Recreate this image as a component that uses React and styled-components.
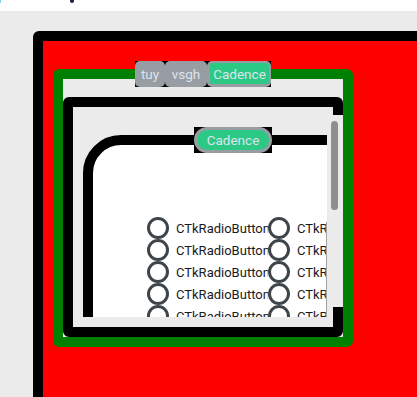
import React from 'react';
import styled, { createGlobalStyle } from 'styled-components';

const GlobalStyle = createGlobalStyle`
  html, body {
    margin: 0;
    padding: 0;
    overflow: hidden;
    background: #ebebeb;
    font-family: Roboto, "Liberation Sans", sans-serif;
  }
`;

const TitleStrip = styled.div`
  height: 11px;
  background: #fff;
  display: flex;
  align-items: flex-start;
`;

const TitleMark = styled.span`
  display: block;
  width: ${p => p.w}px;
  height: 3px;
  margin-left: ${p => p.left}px;
  background: ${p => p.color};
  border-radius: 0 0 2px 2px;
`;

const Desk = styled.div`
  padding: 20px 0 0 33px;
`;

const OuterFrame = styled.div`
  box-sizing: border-box;
  width: 420px;
  height: 400px;
  border: 10px solid #000;
  border-radius: 6px;
  background: #ff0000;
  padding: 20px 0 0 10px;
  overflow: hidden;
`;

const Tabview = styled.div`
  display: flex;
  flex-direction: column;
  align-items: center;
  width: ${p => p.width}px;
  flex-shrink: 0;
`;

const SegBar = styled.div`
  display: flex;
  height: 26px;
  background: #000;
  margin-bottom: -18px;
  position: relative;
  z-index: 1;
`;

const Segment = styled.div`
  box-sizing: border-box;
  width: ${p => p.width}px;
  height: 26px;
  display: flex;
  align-items: center;
  justify-content: center;
  border-radius: 5px;
  font-size: 13.5px;
  color: #dce4ee;
  background: ${p => (p.selected ? '#2cc985' : '#979da2')};
  border: ${p => (p.selected ? '3px solid #979da2' : 'none')};
  border-top-width: 2px;
  border-right-width: 2px;
`;

const TabFrame = styled.div`
  box-sizing: border-box;
  width: 300px;
  height: 278px;
  border: 10px solid #008000;
  border-radius: 6px;
  background: #ebebeb;
  padding-top: 18px;
  display: flex;
`;

const ScrollFrame = styled.div`
  box-sizing: border-box;
  position: relative;
  width: 280px;
  height: 240px;
  border: 10px solid #000;
  border-radius: 6px;
  background: #ebebeb;
  padding: 0 6px 10px 10px;
  display: flex;
`;

const Canvas = styled.div`
  position: relative;
  width: 244px;
  height: 210px;
  overflow: hidden;
  background: #ebebeb;
  display: flex;
`;

const ClipLine = styled.div`
  position: absolute;
  left: 243px;
  top: 115px;
  bottom: 0;
  width: 1px;
  background: #a4a4a4;
`;

const ScrollLane = styled.div`
  position: absolute;
  top: 8px;
  right: -10px;
  bottom: 20px;
  width: 16px;
  background: #ebebeb;
  padding: 6px 0 0 4px;
  box-sizing: border-box;
`;

const Thumb = styled.div`
  width: 7px;
  height: 89px;
  border-radius: 4px;
  background: #8e8e8e;
`;

const PillSlot = styled.div`
  margin-top: 20px;
  margin-bottom: -18px;
  background: #000;
  position: relative;
  z-index: 1;
`;

const Pill = styled.div`
  box-sizing: border-box;
  width: 78px;
  height: 26px;
  border: 3px solid #979da2;
  border-radius: 13px;
  background: #2cc985;
  color: #dce4ee;
  font-size: 13.5px;
  display: flex;
  align-items: center;
  justify-content: center;
`;

const WhiteFrame = styled.div`
  box-sizing: border-box;
  width: 300px;
  height: 300px;
  border: 10px solid #000;
  border-radius: 38px;
  background: #fff;
  padding: 72px 0 0 54px;
`;

const RadioGrid = styled.div`
  display: grid;
  grid-template-columns: 121px 121px;
  grid-auto-rows: 22px;
`;

const Radio = styled.label`
  display: flex;
  align-items: center;
  gap: 7px;
  overflow: hidden;
  white-space: nowrap;
  font-size: 13px;
  color: #1a1a1a;
`;

const RadioCircle = styled.span`
  box-sizing: border-box;
  flex-shrink: 0;
  width: 22px;
  height: 22px;
  border: 3px solid #3e454a;
  border-radius: 50%;
  background: #fff;
`;

const tabs = [
  { label: 'tuy', width: 30 },
  { label: 'vsgh', width: 42 },
  { label: 'Cadence', width: 64, selected: true },
];

const rows = [0, 1, 2, 3, 4, 5];

export default function App() {
  return (
    <>
      <GlobalStyle />
      <TitleStrip>
        <TitleMark left={0} w={1} color="#7fcfff" />
        <TitleMark left={69} w={4} color="#1c2340" />
      </TitleStrip>
      <Desk>
        <OuterFrame>
          <Tabview width={300}>
            <SegBar>
              {tabs.map(t => (
                <Segment key={t.label} width={t.width} selected={t.selected}>
                  {t.label}
                </Segment>
              ))}
            </SegBar>
            <TabFrame>
              <ScrollFrame>
                <Canvas>
                  <Tabview width={300}>
                    <PillSlot>
                      <Pill>Cadence</Pill>
                    </PillSlot>
                    <WhiteFrame>
                      <RadioGrid>
                        {rows.map(r => (
                          <React.Fragment key={r}>
                            <Radio>
                              <RadioCircle />
                              CTkRadioButton
                            </Radio>
                            <Radio>
                              <RadioCircle />
                              CTkRadioButton
                            </Radio>
                          </React.Fragment>
                        ))}
                      </RadioGrid>
                    </WhiteFrame>
                  </Tabview>
                  <ClipLine />
                </Canvas>
                <ScrollLane>
                  <Thumb />
                </ScrollLane>
              </ScrollFrame>
            </TabFrame>
          </Tabview>
        </OuterFrame>
      </Desk>
    </>
  );
}
